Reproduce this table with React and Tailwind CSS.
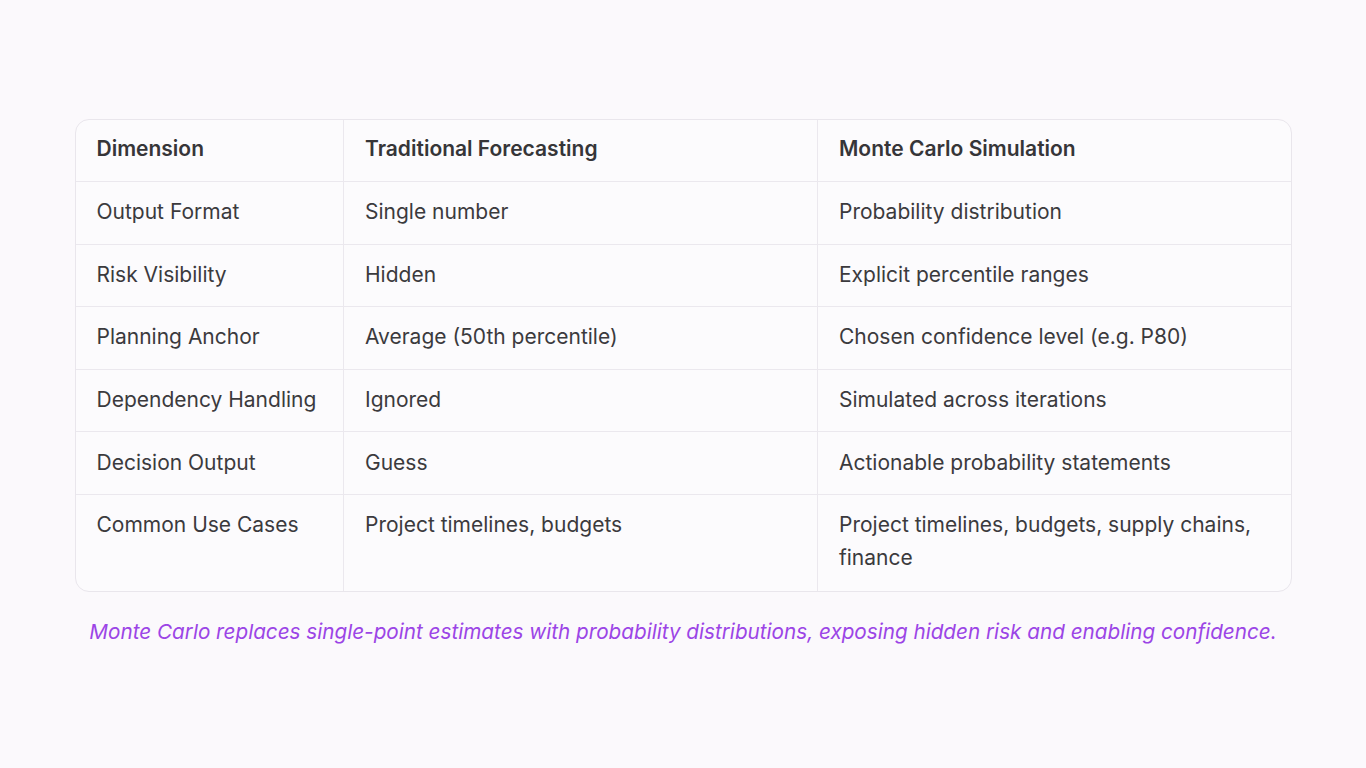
import React from 'react';

const rows = [
  ['Output Format', 'Single number', 'Probability distribution'],
  ['Risk Visibility', 'Hidden', 'Explicit percentile ranges'],
  ['Planning Anchor', 'Average (50th percentile)', 'Chosen confidence level (e.g. P80)'],
  ['Dependency Handling', 'Ignored', 'Simulated across iterations'],
  ['Decision Output', 'Guess', 'Actionable probability statements'],
  ['Common Use Cases', 'Project timelines, budgets', 'Project timelines, budgets, supply chains, finance'],
];

const App = () => {
  return (
    <div
      className="w-[1366px] h-[768px] bg-[#fbf9fc] flex flex-col items-center pt-[119px] text-[#3b3a3d]"
      style={{ fontFamily: 'Inter, "Noto Sans", sans-serif' }}
    >
      <div className="w-[1217px] rounded-[14px] border border-[#e9e6ec] bg-[#fcfbfd] overflow-hidden">
        <table className="w-full border-collapse table-fixed text-[21px] leading-[33px]">
          <colgroup>
            <col className="w-[268px]" />
            <col className="w-[474px]" />
            <col />
          </colgroup>
          <thead>
            <tr>
              {['Dimension', 'Traditional Forecasting', 'Monte Carlo Simulation'].map((h, i) => (
                <th
                  key={h}
                  className={`text-left font-semibold text-[#363538] px-[21px] pt-[12px] pb-[16px] ${i > 0 ? 'border-l border-[#ebe8ee]' : ''}`}
                >
                  {h}
                </th>
              ))}
            </tr>
          </thead>
          <tbody>
            {rows.map((r, ri) => (
              <tr key={r[0]} className="border-t border-[#ebe8ee]">
                {r.map((c, i) => (
                  <td
                    key={i}
                    className={`align-top px-[21px] pt-[13.3px] ${ri === rows.length - 1 ? 'pb-[17px]' : 'pb-[15.3px]'} ${i > 0 ? 'border-l border-[#ebe8ee]' : ''}`}
                  >
                    {c}
                  </td>
                ))}
              </tr>
            ))}
          </tbody>
        </table>
      </div>
      <p className="mt-[24px] italic text-[20.7px] text-[#9b45e6]">
        Monte Carlo replaces single-point estimates with probability distributions, exposing hidden risk and enabling confidence.
      </p>
    </div>
  );
};

export default App;
